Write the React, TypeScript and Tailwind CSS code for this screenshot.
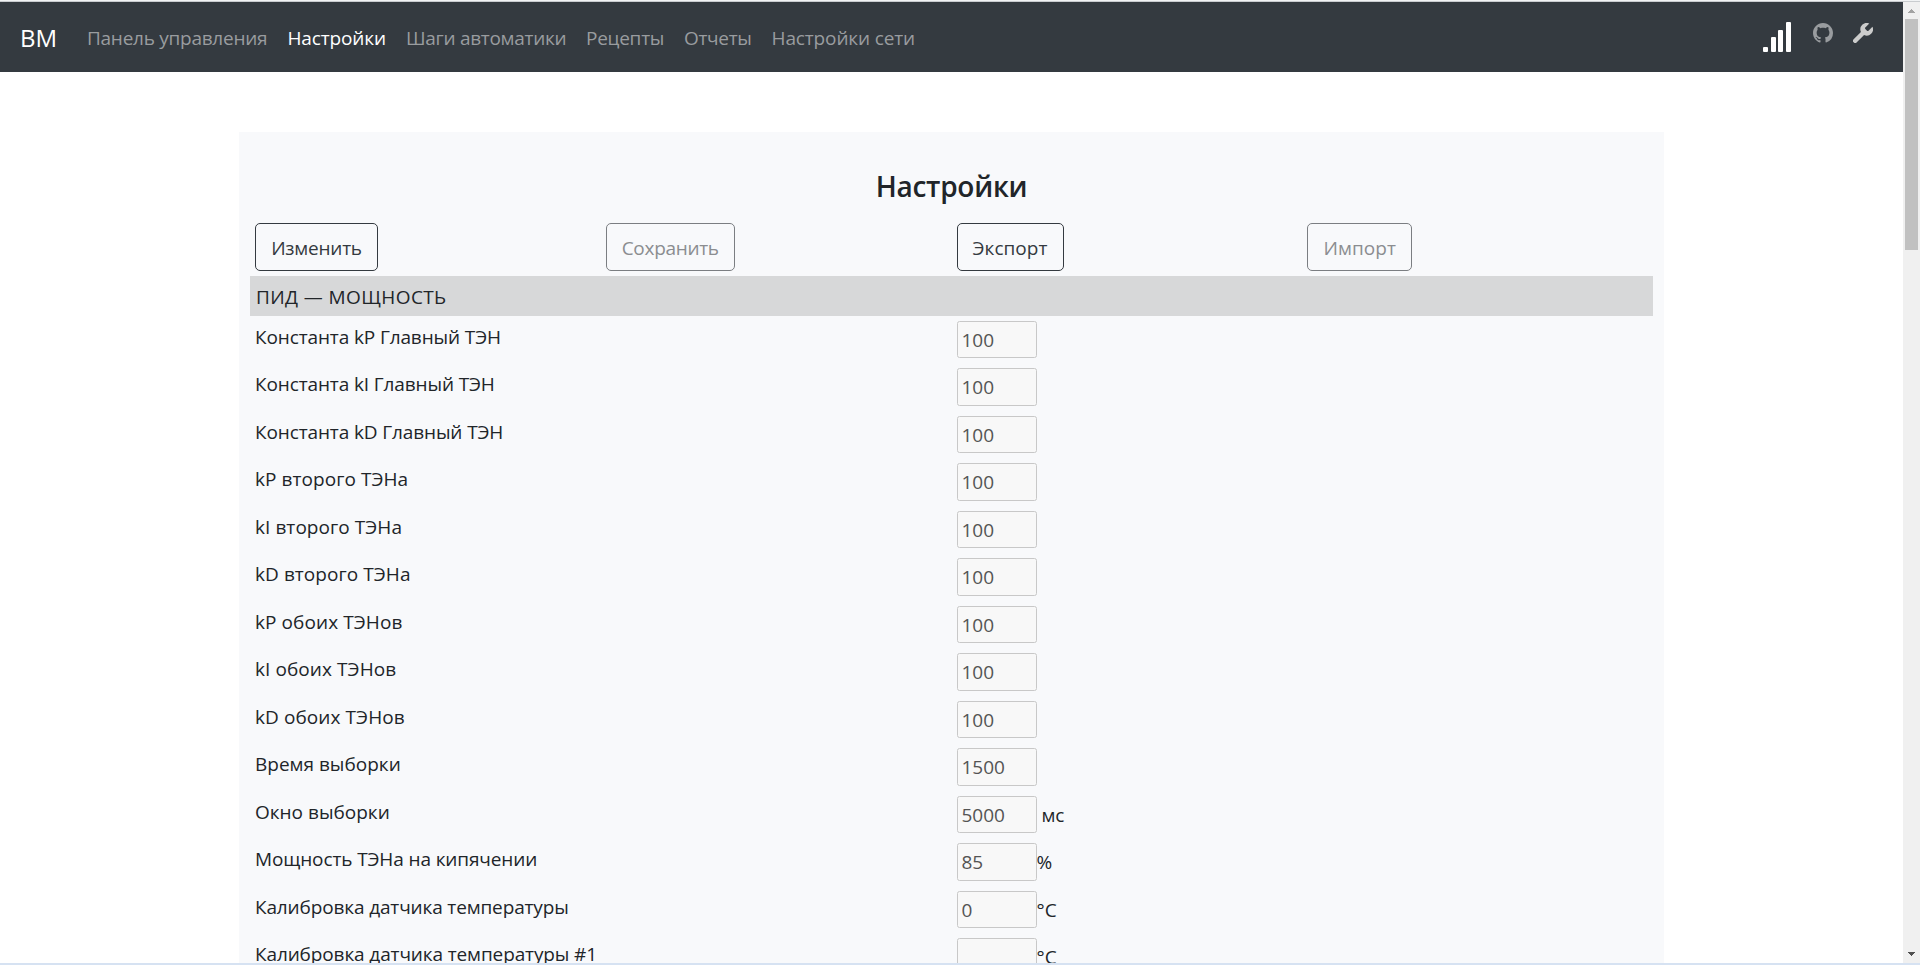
import { BsGithub } from "react-icons/bs";

type Field = { label: string; value: string; unit?: string; className?: string };

const NAV = [
  { title: "Панель управления", className: "w-[200.5px] tracking-[-0.26px] text-[#999c9f]" },
  { title: "Настройки", className: "w-[118.5px] tracking-[-0.14px] text-white" },
  { title: "Шаги автоматики", className: "w-[180px] tracking-[-0.29px] text-[#999c9f]" },
  { title: "Рецепты", className: "w-[98px] tracking-[-0.26px] text-[#999c9f]" },
  { title: "Отчеты", className: "w-[87.5px] tracking-[-0.3px] text-[#999c9f]" },
  { title: "Настройки сети", className: "tracking-[-0.13px] text-[#999c9f]" },
];

const ACTIONS = [
  { title: "Изменить", disabled: false, className: "w-[123px] tracking-[-0.22px]" },
  { title: "Сохранить", disabled: true, className: "w-[129px] tracking-[-0.3px]" },
  { title: "Экспорт", disabled: false, className: "w-[107px] tracking-[0.05px]" },
  { title: "Импорт", disabled: true, className: "w-[105px] tracking-[0.08px]" },
];

const FIELDS: Field[] = [
  { label: "Константа kP Главный ТЭН", value: "100", className: "tracking-[-0.12px]" },
  { label: "Константа kI Главный ТЭН", value: "100", className: "tracking-[-0.12px]" },
  { label: "Константа kD Главный ТЭН", value: "100", className: "tracking-[-0.12px]" },
  { label: "kP второго ТЭНа", value: "100", className: "tracking-[0.06px]" },
  { label: "kI второго ТЭНа", value: "100", className: "tracking-[0.06px]" },
  { label: "kD второго ТЭНа", value: "100", className: "tracking-[0.06px]" },
  { label: "kP обоих ТЭНов", value: "100", className: "tracking-[0.08px]" },
  { label: "kI обоих ТЭНов", value: "100", className: "tracking-[0.08px]" },
  { label: "kD обоих ТЭНов", value: "100", className: "tracking-[0.08px]" },
  { label: "Время выборки", value: "1500" },
  { label: "Окно выборки", value: "5000", unit: " мс" },
  { label: "Мощность ТЭНа на кипячении", value: "85", unit: "%", className: "tracking-[-0.12px]" },
  { label: "Калибровка датчика температуры", value: "0", unit: "°C", className: "tracking-[-0.14px]" },
  { label: "Калибровка датчика температуры #1", value: "", unit: "°C", className: "tracking-[-0.12px]" },
];

function SignalBars() {
  return (
    <div className="flex h-[30px] w-[28px] items-end justify-between">
      <span className="h-[5px] w-[5px] rounded-[1px] bg-white" />
      <span className="h-[15px] w-[5px] rounded-[1px] bg-white" />
      <span className="h-[22px] w-[5px] rounded-[1px] bg-white" />
      <span className="h-[30px] w-[5px] rounded-[1px] bg-white" />
    </div>
  );
}

function WrenchIcon() {
  return (
    <svg width="20" height="20" viewBox="3 2 19 19" className="mt-px ml-5 text-[#ccc]" fill="currentColor">
      <path d="M14.7 6.3a1 1 0 0 0 0 1.4l1.6 1.6a1 1 0 0 0 1.4 0l3.77-3.77a6 6 0 0 1-7.94 7.94l-6.91 6.91a2.12 2.12 0 0 1-3-3l6.91-6.91a6 6 0 0 1 7.94-7.94z" />
    </svg>
  );
}

function Scrollbar() {
  return (
    <div className="flex w-[17px] shrink-0 flex-col items-center bg-[#f0f0f0]">
      <svg width="7" height="4" viewBox="0 0 7 4" className="mt-[7px] shrink-0" shapeRendering="crispEdges">
        <path d="M3 0h1v1h1v1h1v1h1v1H0V3h1V2h1V1h1z" fill="#a3a3a3" />
      </svg>
      <div className="mt-[6px] h-[231px] w-[13px] shrink-0 bg-[#c1c1c1]" />
      <svg width="7" height="4" viewBox="0 0 7 4" className="mt-auto mb-[7px] shrink-0" shapeRendering="crispEdges">
        <path d="M0 0h7v1H6v1H5v1H4v1H3V3H2V2H1V1H0z" fill="#505050" />
      </svg>
    </div>
  );
}

export default function App() {
  return (
    <div className="flex h-[965px] w-[1920px] flex-col overflow-hidden bg-white font-['Open_Sans','Noto_Sans',sans-serif] text-[19px] leading-[30px] text-[#212529]">
      <div className="h-[2px] shrink-0 border-b border-[#c9cccf] bg-[#f1f3f4]" />
      <div className="flex min-h-0 flex-1">
        <div className="flex min-w-0 flex-1 flex-col overflow-hidden">
          {/* Navbar */}
          <nav className="flex h-[70px] shrink-0 bg-[#343a40] pr-[30px] pl-[20px]">
            <div className="flex flex-1 items-center pt-[2px]">
              <span className="w-[57px] text-[24px] text-white">BM</span>
              {NAV.map((n) => (
                <a key={n.title} className={`px-[10px] whitespace-nowrap ${n.className}`}>
                  {n.title}
                </a>
              ))}
            </div>
            <div className="flex items-start pt-[20px]">
              <SignalBars />
              <BsGithub size={20} className="mt-px ml-[22px] text-[#999c9f]" />
              <WrenchIcon />
            </div>
          </nav>

          {/* Settings */}
          <main className="mt-[60px] ml-[239px] flex w-[1425px] flex-1 flex-col overflow-hidden bg-[#f8f9fb] px-[11px]">
            <h4 className="mt-[36px] text-center text-[28px] leading-9 font-semibold tracking-[-0.25px]">Настройки</h4>
            <div className="mt-[19px] grid h-[53px] shrink-0 grid-cols-4">
              {ACTIONS.map((a) => (
                <div key={a.title} className="px-[5px]">
                  <button
                    disabled={a.disabled}
                    className={`h-[48px] rounded-[5px] border border-[#343a40] pt-px text-[#343a40] disabled:border-[#7b7e82] disabled:text-[#8b8d90] ${a.className}`}
                  >
                    {a.title}
                  </button>
                </div>
              ))}
            </div>
            <div className="h-[39.8px] shrink-0 bg-[#d7d8d9] px-[6px] pt-[6px] tracking-[0.4px]">ПИД — МОЩНОСТЬ</div>
            {FIELDS.map((f) => (
              <div key={f.label} className="grid h-[47.5px] shrink-0 grid-cols-2 pt-[5px]">
                <span className={`px-[5px] pt-[0.95px] ${f.className ?? ""}`}>{f.label}</span>
                <div className="flex px-[5px]">
                  <input
                    disabled
                    defaultValue={f.value}
                    className="h-[37.5px] w-[80px] rounded-[2.5px] border border-[#c8c8c8] bg-[#f8f8f8] px-[4px] text-[#545454]"
                  />
                  <span className="pt-[4px] whitespace-pre">{f.unit}</span>
                </div>
              </div>
            ))}
          </main>
        </div>
        <Scrollbar />
      </div>
      <div className="h-[2px] shrink-0 bg-[#d6e2f2]" />
    </div>
  );
}
